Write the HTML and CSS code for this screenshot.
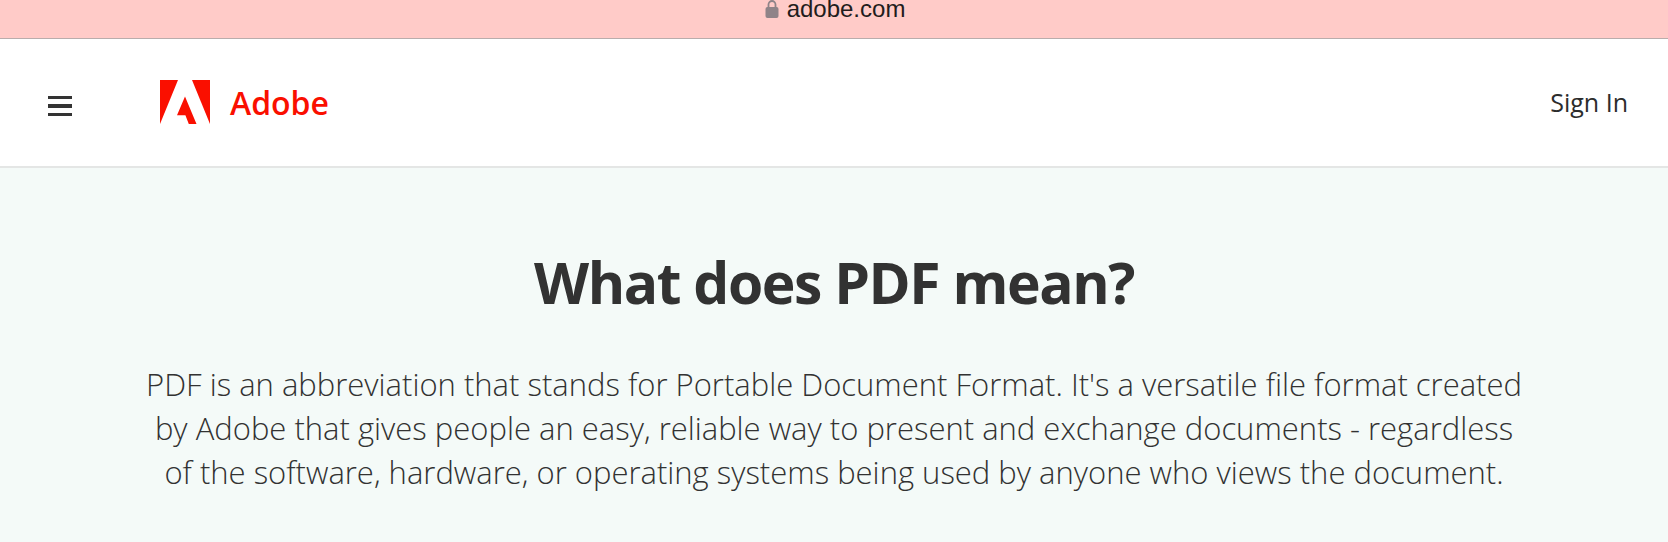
FILE: index.html
```html
<!DOCTYPE html>
<html lang="en">
  <head>
    <meta charset="UTF-8" />
    <title>What does PDF mean?</title>
    <link rel="stylesheet" href="styles.css">
  </head>
  <body>
    <div class="address-bar">
      <svg class="lock" width="14" height="18" viewBox="0 0 14 18">
        <path d="M3.5 8V4.5a3.5 3.5 0 0 1 7 0V8" fill="none" stroke="#8f8388" stroke-width="1.8" />
        <rect x="0.5" y="7" width="13" height="11" rx="2" fill="#8f8388" />
      </svg>
      <span>adobe.com</span>
    </div>

    <header class="nav">
      <div class="burger">
        <span></span>
        <span></span>
        <span></span>
      </div>
      <a class="brand">
        <svg width="50" height="44" viewBox="0 0 50 44">
          <path d="M0 0H18L0 44Z" fill="#fa0f00" />
          <path d="M32 0H50V44Z" fill="#fa0f00" />
          <path d="M25 16.500L36.500 44H28.800L25.400 35.200H17L25 16.500Z" fill="#fa0f00" />
        </svg>
        <span class="brand-name">Adobe</span>
      </a>
      <a class="sign-in">Sign In</a>
    </header>

    <main class="hero">
      <h1>What does PDF mean?</h1>
      <p>
        PDF is an abbreviation that stands for Portable Document Format. It's a versatile file format created<br>
        by Adobe that gives people an easy, reliable way to present and exchange documents - regardless<br>
        of the software, hardware, or operating systems being used by anyone who views the document.
      </p>
    </main>
  </body>
</html>
```

FILE: styles.css
```css
* {
  box-sizing: border-box;
}
body {
  margin: 0;
  height: 542px;
  overflow: hidden;
  display: flex;
  flex-direction: column;
  font-family: "Open Sans", "Liberation Sans", sans-serif;
  background-color: #f4faf8;
}
.address-bar {
  height: 39px;
  padding: 0 0 20px 2px;
  background-color: #ffcbc8;
  border-bottom: 1px solid #b9adac;
  display: flex;
  justify-content: center;
  align-items: center;
  gap: 8px;
  font-family: "Liberation Sans", sans-serif;
  font-size: 24px;
  color: #221c1c;
}
.lock {
  flex: none;
}
.nav {
  height: 129px;
  padding: 0 40px 0 48px;
  background-color: #fff;
  border-bottom: 2px solid #e4e6e5;
  display: flex;
  align-items: center;
}
.burger {
  width: 24px;
  margin-top: 7px;
  display: flex;
  flex-direction: column;
  gap: 5px;
}
.burger span {
  height: 3.5px;
  background-color: #333;
}
.brand {
  margin-left: 88px;
  margin-bottom: 2px;
  display: flex;
  align-items: center;
  gap: 20px;
  color: #fa0f00;
  font-size: 32px;
  font-weight: 600;
}
.brand-name {
  padding-top: 2px;
}
.sign-in {
  margin-left: auto;
  margin-bottom: 2px;
  font-size: 25px;
  color: #2c2c2c;
}
.hero {
  padding-top: 76px;
  text-align: center;
  color: #323232;
}
.hero h1 {
  margin: 0;
  font-size: 57px;
  line-height: 76px;
  font-weight: 700;
  letter-spacing: -1.450px;
}
.hero p {
  margin: 42px 0 0;
  font-size: 31px;
  line-height: 44px;
  font-weight: 300;
}
```
